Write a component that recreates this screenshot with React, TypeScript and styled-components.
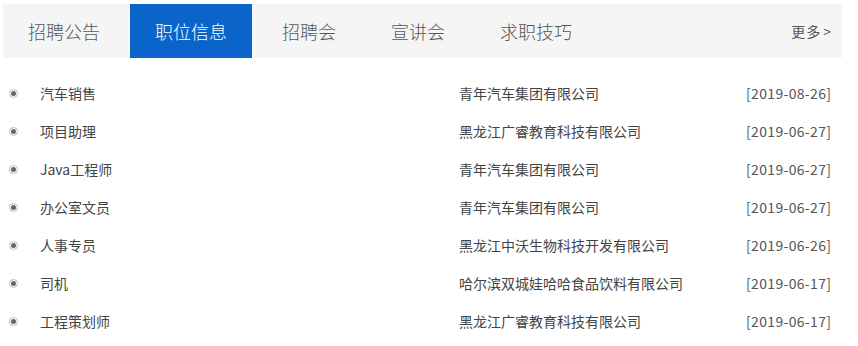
import React from "react";
import styled, { createGlobalStyle } from "styled-components";

const GlobalStyle = createGlobalStyle`
  body {
    margin: 0;
    background: #fff;
    font-family: "Noto Sans CJK SC", "Microsoft YaHei", sans-serif;
  }
`;

const Wrapper = styled.div`
  width: 839px;
  padding: 4px 0 0 3px;
`;

const TabBar = styled.div`
  display: flex;
  align-items: stretch;
  height: 54px;
  background: #f5f5f5;
`;

const Tab = styled.div<{ $active?: boolean }>`
  display: flex;
  align-items: center;
  padding: 0 25px;
  margin-right: 5px;
  font-size: 18px;
  font-weight: 300;
  color: ${({ $active }) => ($active ? "#fff" : "#555")};
  background: ${({ $active }) => ($active ? "#0a64c9" : "transparent")};
  cursor: pointer;
`;

const More = styled.a`
  margin-left: auto;
  align-self: center;
  padding-right: 10px;
  font-size: 14px;
  letter-spacing: 1px;
  color: #555;
  text-decoration: none;

  span {
    margin-left: 2px;
  }
`;

const List = styled.ul`
  list-style: none;
  margin: 16px 0 0;
  padding: 0 11px 0 6px;
`;

const Row = styled.li`
  display: grid;
  grid-template-columns: 31px 419px 1fr auto;
  align-items: center;
  height: 38px;
  font-size: 14px;
  line-height: 20px;
  color: #444;
`;

const Bullet = styled.span`
  box-sizing: border-box;
  width: 9px;
  height: 9px;
  border-radius: 50%;
  border: 1px solid #bbb;
  display: flex;
  align-items: center;
  justify-content: center;

  &::after {
    content: "";
    width: 5px;
    height: 5px;
    border-radius: 50%;
    background: #666;
  }
`;

const Title = styled.span`
  color: #444;
`;

const Company = styled.span`
  color: #444;
`;

const Date = styled.span`
  color: #555;
  letter-spacing: 0.33px;
  margin-right: -0.33px;
`;

const tabs = ["招聘公告", "职位信息", "招聘会", "宣讲会", "求职技巧"];

const jobs = [
  { title: "汽车销售", company: "青年汽车集团有限公司", date: "2019-08-26" },
  { title: "项目助理", company: "黑龙江广睿教育科技有限公司", date: "2019-06-27" },
  { title: "Java工程师", company: "青年汽车集团有限公司", date: "2019-06-27" },
  { title: "办公室文员", company: "青年汽车集团有限公司", date: "2019-06-27" },
  { title: "人事专员", company: "黑龙江中沃生物科技开发有限公司", date: "2019-06-26" },
  { title: "司机", company: "哈尔滨双城娃哈哈食品饮料有限公司", date: "2019-06-17" },
  { title: "工程策划师", company: "黑龙江广睿教育科技有限公司", date: "2019-06-17" },
];

const App: React.FC = () => {
  return (
    <>
      <GlobalStyle />
      <Wrapper>
        <TabBar>
          {tabs.map((t, i) => (
            <Tab key={t} $active={i === 1}>
              {t}
            </Tab>
          ))}
          <More href="#">
            更多<span>&gt;</span>
          </More>
        </TabBar>
        <List>
          {jobs.map((j, i) => (
            <Row key={i}>
              <Bullet />
              <Title>{j.title}</Title>
              <Company>{j.company}</Company>
              <Date>[{j.date}]</Date>
            </Row>
          ))}
        </List>
      </Wrapper>
    </>
  );
};

export default App;
